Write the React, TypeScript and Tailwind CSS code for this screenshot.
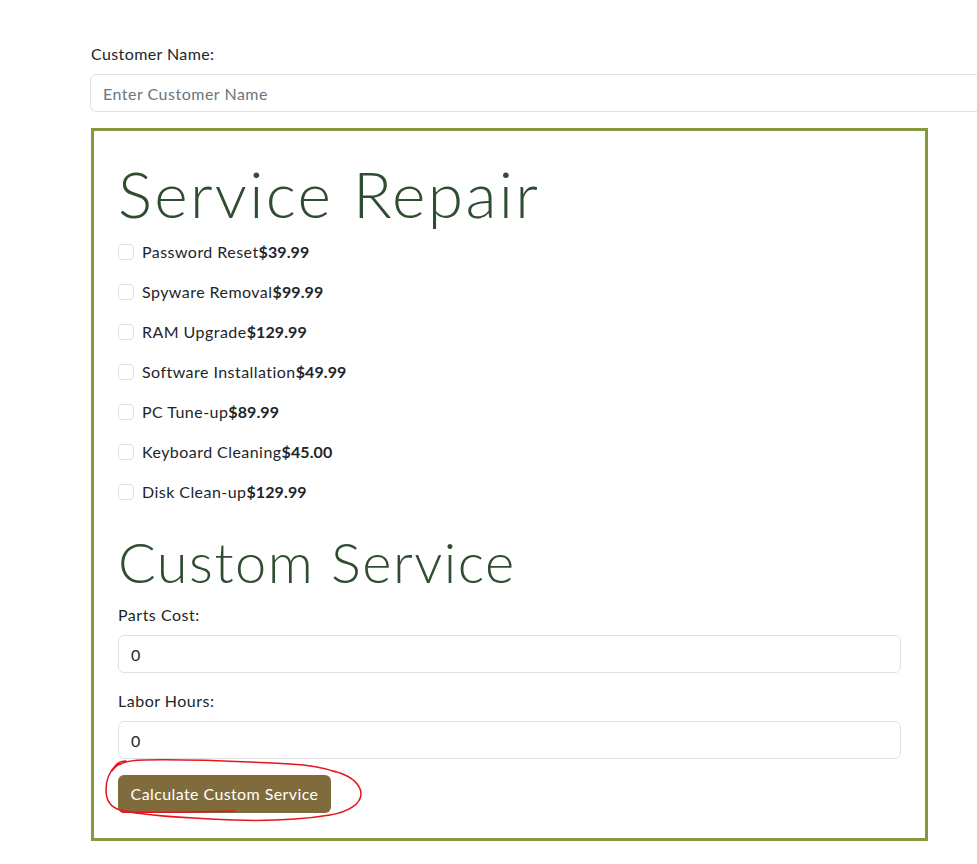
import React from "react";

const services: [string, string][] = [
  ["Password Reset", "$39.99"],
  ["Spyware Removal", "$99.99"],
  ["RAM Upgrade", "$129.99"],
  ["Software Installation", "$49.99"],
  ["PC Tune-up", "$89.99"],
  ["Keyboard Cleaning", "$45.00"],
  ["Disk Clean-up", "$129.99"],
];

export default function App() {
  return (
    <div
      className="w-[977px] h-[864px] overflow-hidden bg-white text-[#212529]"
      style={{ fontFamily: "Lato, 'Open Sans', sans-serif" }}
    >
      <div className="pl-[90px] pt-[42px]">
        <label className="block h-6 leading-6 text-base tracking-[0.4px] text-[#212529] pl-px mb-2">Customer Name:</label>
        <input
          type="text"
          placeholder="Enter Customer Name"
          className="block w-[960px] h-[38px] border border-[#dee2e6] rounded-md px-3 text-base tracking-[0.5px] text-[#212529] placeholder:text-[#6c757d] outline-none"
        />
        <div className="mt-4 ml-px w-[837px] h-[713px] border-[3px] border-[#849a3c] p-6">
          <h1 className="h-[77px] leading-[77px] text-[64px] font-light tracking-[2.3px] text-[#2f4d31] mb-2">Service Repair</h1>
          <div className="flex flex-col gap-4">
            {services.map(([name, price]) => (
              <div key={name} className="flex items-center h-6 leading-6">
                <span className="w-4 h-4 border border-[#dee2e6] rounded-[4px] mr-2 shrink-0" />
                <span className="text-base tracking-[0.45px] text-[#212529]">
                  {name}
                  <b className="font-bold tracking-[0.1px]">{price}</b>
                </span>
              </div>
            ))}
          </div>
          <h2 className="mt-6 h-[67px] leading-[67px] text-[56px] font-light tracking-[1.5px] text-[#2f4d31] mb-2">Custom Service</h2>
          <label className="block h-6 leading-6 text-base tracking-[0.5px] mb-2">Parts Cost:</label>
          <input
            type="text"
            defaultValue="0"
            className="block w-full h-[38px] border border-[#dee2e6] rounded-md px-3 text-base text-[#212529] outline-none mb-4"
          />
          <label className="block h-6 leading-6 text-base tracking-[0.5px] mb-2">Labor Hours:</label>
          <input
            type="text"
            defaultValue="0"
            className="block w-full h-[38px] border border-[#dee2e6] rounded-md px-3 text-base text-[#212529] outline-none mb-4"
          />
          <div className="relative w-[213px]">
            <button className="w-[213px] h-[38px] rounded-md bg-[#806b3c] text-white text-base tracking-[0.4px]">
              Calculate Custom Service
            </button>
            <svg
              className="absolute left-[-18px] top-[-23px] pointer-events-none"
              width="270"
              height="72"
              viewBox="0 0 270 72"
              fill="none"
            >
              <path
                d="M12 19 C16 12 28 8 45 8 C100 7 150 10 190 12 C210 13 225 16 236 20 C232 19 231 18 240 21 C252 25 261 33 261 42 C261 52 248 60 230 63 C200 68 160 70 110 67 C70 65 35 62 20 58 C10 55 6 47 6 38 C6 28 9 20 16 13 C19 10 22 9 26 9"
                stroke="#e8141c"
                strokeWidth="1.5"
                strokeLinecap="round"
                strokeLinejoin="round"
              />
              <path
                d="M22 60 C60 61 100 60 135 59"
                stroke="#e8141c"
                strokeWidth="1.3"
                strokeLinecap="round"
              />
            </svg>
          </div>
        </div>
      </div>
    </div>
  );
}
